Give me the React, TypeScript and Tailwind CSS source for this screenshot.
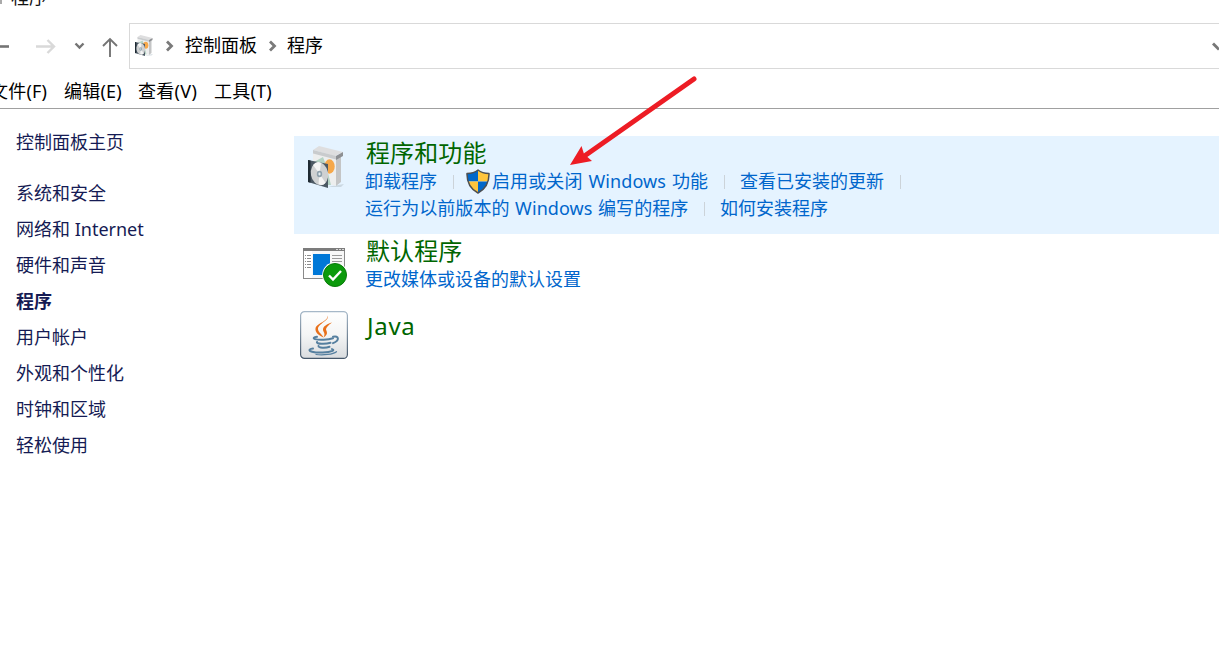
import type { ReactNode } from "react";

function PackageIcon({ className }: { className: string }) {
  return (
    <svg viewBox="0 0 36 42" className={className}>
      <path d="M24 40l12-2-3 3H20z" fill="#b9c6cf" opacity=".6" />
      <path d="M5 5L28 9v31L5 34z" fill="#edeeee" />
      <path d="M28 10l5-2v28l-5 4z" fill="#c4c5c6" />
      <path d="M6 16l9-5 3 8 5 20-8 0z" fill="#b5d3c4" />
      <ellipse cx="21.500" cy="20.500" rx="5.200" ry="7.200" fill="#f6a84a" />
      <path d="M5 4l6-4 24 6-8 4z" fill="#dededf" />
      <path d="M5 4l23 6v3.500L5 7.500z" fill="#c9cbcd" />
      <path d="M28 10l7-4v4l-7 4z" fill="#8e9093" />
      <path d="M0 14l20 4v24L0 36z" fill="#4c5964" />
      <path d="M0 14l2.500 .5v22.200L0 36z" fill="#1f2a33" />
      <ellipse cx="11.500" cy="27.800" rx="8.600" ry="11.500" transform="rotate(-10 11.500 27.800)" fill="#cfd1d2" />
      <path d="M11.500 27.800L5 19q4-5 8-2zM11.500 27.800l6 9q-3 4-7 1z" fill="#f5f5f5" />
      <ellipse cx="11.500" cy="28" rx="2.700" ry="3.300" fill="#8fa1ad" />
      <ellipse cx="11.500" cy="28" rx="1.100" ry="1.400" fill="#e5edf1" />
    </svg>
  );
}

function DefaultsIcon() {
  return (
    <svg viewBox="0 0 46 42" className="h-[42px] w-[46px]">
      <rect x="1.500" y="2.500" width="41" height="30" fill="#f7f7f7" stroke="#8a8a8a" />
      <rect x="1" y="2" width="42" height="3" fill="#7c7c7c" />
      <path d="M34 3.500h2m1 0h2m1 0h2" stroke="#d8d8d8" />
      <path d="M2 5h8v27H2z" fill="#fff" />
      <path d="M3 9.500h1m1 0h4M3 12.500h1m1 0h4M3 15.500h1m1 0h4M3 18.500h1m1 0h4M3 21.500h1m1 0h4" stroke="#8b8b8b" />
      <path d="M30 9.500h10M30 12.500h10M30 15.500h10M30 18.500h10" stroke="#9a9a9a" />
      <rect x="11" y="8" width="17" height="21" fill="#0078d7" />
      <circle cx="33" cy="29" r="12.800" fill="#fff" />
      <circle cx="33" cy="29" r="11.500" fill="#0b9a0b" stroke="#087b08" />
      <path d="M27 29.500l4 4 8-8.500" fill="none" stroke="#fff" strokeWidth="2.400" />
    </svg>
  );
}

function JavaIcon() {
  return (
    <svg viewBox="0 0 48 48" className="size-12">
      <defs>
        <linearGradient id="tile" x2="0" y2="1">
          <stop stopColor="#ffffff" />
          <stop offset=".5" stopColor="#f4f5f5" />
          <stop offset="1" stopColor="#d9dcdf" />
        </linearGradient>
        <linearGradient id="rim" x2="0" y2="1">
          <stop stopColor="#a6b8c8" />
          <stop offset="1" stopColor="#46586b" />
        </linearGradient>
      </defs>
      <rect x=".6" y=".6" width="46.800" height="46.800" rx="4" fill="url(#tile)" stroke="url(#rim)" strokeWidth="1.200" />
      <path d="M27.500 4.500c2.500 5-9.500 8-9.500 13.500 0 3 3.500 4.500 5.500 8.500-5.500-2.500-8.500-5.500-8-9C16.500 12 28.500 10.500 27.500 4.500z" fill="#e8701a" />
      <path d="M32 11.500c-5 1.500-9 4-9 7 0 2.500 3 3.500.5 8 5.500-3.500 3-6 2.500-8 0-2 2-4 6-7z" fill="#e8701a" />
      <g fill="none" stroke="#557f9f" strokeWidth="2" strokeLinecap="round">
        <path d="M17 25.800c-3 .5-4.500 1.500-2 2.300 4 1.200 13 .8 18-.8" />
        <path d="M33 25.800c6-1.500 7 3.500 0 6.400" />
        <path d="M17 31c-1 2 8 2.500 13.500 .8" />
        <path d="M18.500 35c-.5 2 7 2.200 11 .8" />
        <path d="M13 37.500c-4 .5-5 2.200-1 3.200 6 1.500 16 1 20.500-.8 1.500-.8.500-1.500-.5-1.800" />
        <path d="M16 43.500c7 .8 17 0 20.500-2.800" strokeWidth="1.200" />
      </g>
    </svg>
  );
}

function ShieldIcon() {
  const outline = "M12 1C9 3.500 5 4.500 1 4.500C.8 13 3.500 19.500 12 24C20.500 19.500 23.200 13 23 4.500C19 4.500 15 3.500 12 1z";
  return (
    <svg viewBox="0 0 24 25" className="h-[25px] w-6 shrink-0">
      <clipPath id="shield"><path d={outline} /></clipPath>
      <g clipPath="url(#shield)">
        <path d="M0 0h12v12.500H0z" fill="#0067ca" />
        <path d="M12 0h12v12.500H12z" fill="#ffc53d" />
        <path d="M0 12.500h12V25H0z" fill="#ffc53d" />
        <path d="M12 12.500h12V25H12z" fill="#0067ca" />
      </g>
      <path d={outline} fill="none" stroke="#4c4f52" strokeWidth="1.500" strokeLinejoin="round" />
    </svg>
  );
}

function Crumb() {
  return (
    <svg viewBox="0 0 8 12" className="h-3 w-2">
      <path d="M1 1.500L5.500 6 1 10.500" fill="none" stroke="#7a7a7a" strokeWidth="2.800" />
    </svg>
  );
}

function Separator({ className }: { className: string }) {
  return <span className={`h-[14px] w-px shrink-0 bg-[#ccd3d9] ${className}`} />;
}

function Link({ className, children }: { className: string; children: ReactNode }) {
  return <a className={`shrink-0 text-[#0066cc] ${className}`}>{children}</a>;
}

const categories = ["系统和安全", "网络和 Internet", "硬件和声音", "程序", "用户帐户", "外观和个性化", "时钟和区域", "轻松使用"];

export default function App() {
  return (
    <div className="relative flex h-[669px] w-[1219px] flex-col overflow-hidden bg-white font-['Noto_Sans','Noto_Sans_CJK_SC',sans-serif] text-[18px] whitespace-nowrap text-black">
      <header className="flex h-[23px] shrink-0 items-start overflow-hidden">
        <span className="h-[4px] w-[2px] bg-[#aaa]" />
        <span className="-mt-[15px] ml-[9px] leading-[24px] text-[#111]">程序</span>
      </header>

      <div className="flex h-[46px] shrink-0">
        <nav className="flex w-[129px] shrink-0 items-center">
          <svg viewBox="0 0 129 46" className="h-[46px] w-[129px]" fill="none">
            <path d="M0 23.500h9" stroke="#747474" strokeWidth="2.600" />
            <path d="M36 23.500h18M47.500 17l6.500 6.500-6.500 6.500" stroke="#d9d9d9" strokeWidth="2.400" />
            <path d="M75.500 20.500l4 4 4-4" stroke="#747474" strokeWidth="2.400" />
            <path d="M110 34V16M103 23l7-7 7 7" stroke="#747474" strokeWidth="1.900" />
          </svg>
        </nav>
        <div className="flex flex-1 items-center border-y border-l border-[#d9d9d9] pb-px pl-[5px]">
          <PackageIcon className="h-[21px] w-[18px]" />
          <span className="ml-[13px] pt-px"><Crumb /></span>
          <span className="ml-[11px] w-[84px]">控制面板</span>
          <span className="pt-px"><Crumb /></span>
          <span className="ml-[10px]">程序</span>
          <svg viewBox="0 0 8 10" className="mt-[3px] ml-auto h-[10px] w-2">
            <path d="M2 1.500l6 6" stroke="#777" strokeWidth="2.800" />
          </svg>
        </div>
      </div>

      <nav className="flex h-10 shrink-0 items-center border-b border-[#a0a0a0] pt-[5px]">
        <span className="-ml-[10px] w-[74px] tracking-[0.2px]">文件(F)</span>
        <span className="w-[74px] tracking-[0.2px]">编辑(E)</span>
        <span className="w-[76px] tracking-[0.3px]">查看(V)</span>
        <span className="tracking-[0.2px]">工具(T)</span>
      </nav>

      <div className="flex flex-1">
        <aside className="flex w-[294px] shrink-0 flex-col pt-[15px] pl-4 text-[#151b54]">
          <a className="mb-[15px] h-9 leading-9">控制面板主页</a>
          {categories.map((name) => (
            <a key={name} className={`h-9 leading-9 ${name === "程序" ? "font-bold" : ""}`}>{name}</a>
          ))}
        </aside>

        <main className="flex flex-1 flex-col pt-[27px]">
          <section className="flex h-[98px] bg-[#e5f3ff]">
            <div className="w-[71px] shrink-0 pt-[10px] pl-[14px]">
              <PackageIcon className="h-[42px] w-9" />
            </div>
            <div>
              <h2 className="ml-px h-8 text-[24px] leading-[34px] tracking-[0.1px] text-[#006600]">程序和功能</h2>
              <div className="flex h-[27px] items-center">
                <Link className="w-[88px]">卸载程序</Link>
                <Separator className="mr-[12px]" />
                <ShieldIcon />
                <Link className="ml-[2px] w-[232px] tracking-[0.12px] [word-spacing:1px]">启用或关闭 Windows 功能</Link>
                <Separator className="mr-[15px]" />
                <Link className="w-[160px]">查看已安装的更新</Link>
                <Separator className="" />
              </div>
              <div className="flex h-[27px] items-center">
                <Link className="w-[339px] tracking-[0.07px] [word-spacing:0.8px]">运行为以前版本的 Windows 编写的程序</Link>
                <Separator className="mr-[15px]" />
                <Link className="">如何安装程序</Link>
              </div>
            </div>
          </section>

          <section className="flex h-[75px]">
            <div className="w-[71px] shrink-0 pt-[12px] pl-[8px]"><DefaultsIcon /></div>
            <div>
              <h2 className="ml-px h-8 text-[24px] leading-[33px] tracking-[0.1px] text-[#006600]">默认程序</h2>
              <div className="flex h-[27px] items-center"><Link className="">更改媒体或设备的默认设置</Link></div>
            </div>
          </section>

          <section className="flex">
            <div className="w-[71px] shrink-0 pt-[2px] pl-[6px]"><JavaIcon /></div>
            <h2 className="ml-[2px] h-8 text-[24px] leading-[34px] tracking-[0.7px] text-[#006600]">Java</h2>
          </section>
        </main>
      </div>

      <svg viewBox="0 0 130 92" className="absolute top-[74px] left-[569px] h-[92px] w-[130px]">
        <path d="M125 5L14 83" stroke="#ed1c24" strokeWidth="5" strokeLinecap="round" />
        <path d="M1 91L12.500 72l2.500 8 8 7z" fill="#ed1c24" />
      </svg>
    </div>
  );
}
